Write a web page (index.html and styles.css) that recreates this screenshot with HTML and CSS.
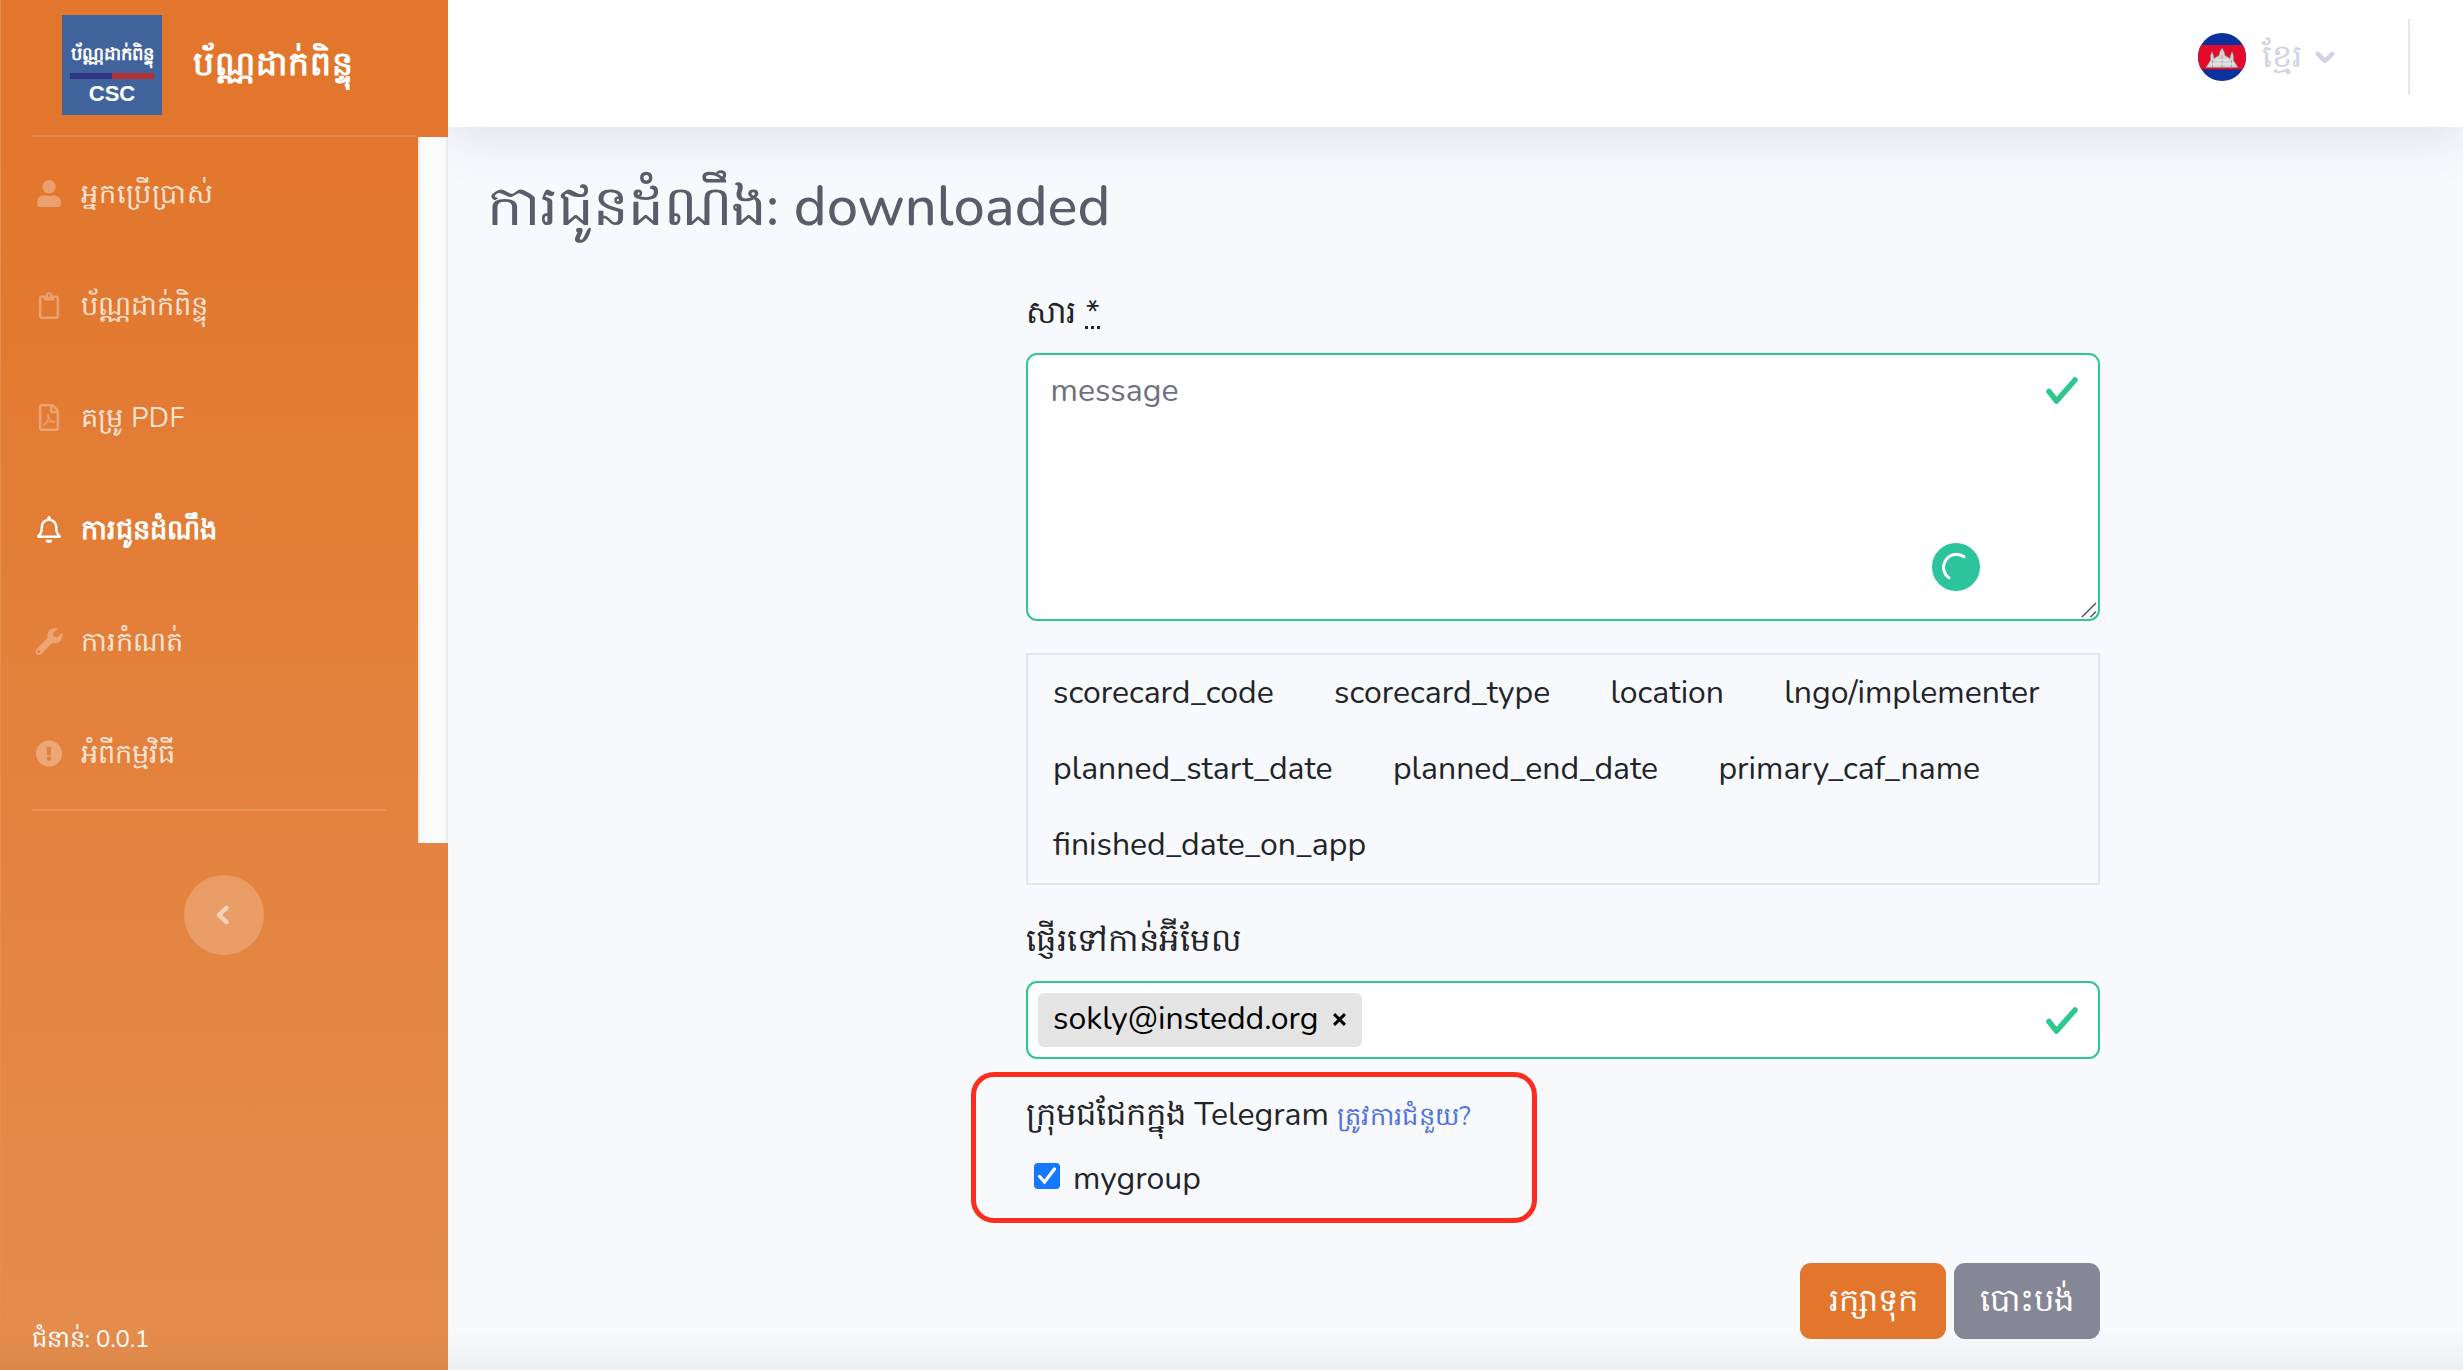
FILE: index.html
```html
<!DOCTYPE html>
<html lang="km">
<head>
<meta charset="utf-8">
<title>ការជូនដំណឹង</title>
<link rel="stylesheet" href="styles.css">
</head>
<body>
<div class="page">
  <aside class="sidebar">
    <a class="brand">
      <span class="logo"><span class="logo-name">ប័ណ្ណដាក់ពិន្ទុ</span><span class="logo-bar"></span><span class="logo-csc">CSC</span></span>
      <span class="brand-title">ប័ណ្ណដាក់ពិន្ទុ</span>
    </a>
    <hr class="rule rule-top">
    <div class="nav-wrap">
      <nav class="nav">
        <a class="item"><svg class="ico" viewBox="0 0 448 512"><path d="M224 256a128 128 0 1 0 0-256 128 128 0 1 0 0 256zm89.600 32h-16.700c-22.200 10.200-46.900 16-72.900 16s-50.600-5.800-72.900-16h-16.700C60.200 288 0 348.200 0 422.400V464c0 26.500 21.500 48 48 48h352c26.500 0 48-21.500 48-48v-41.600c0-74.200-60.200-134.400-134.400-134.400z"/></svg><span class="nm-users">អ្នកប្រើប្រាស់</span></a>
        <a class="item"><svg class="ico" viewBox="-32 0 448 512"><path d="M336 64h-80c0-35.300-28.700-64-64-64s-64 28.700-64 64H48C21.500 64 0 85.500 0 112v352c0 26.500 21.500 48 48 48h288c26.500 0 48-21.500 48-48V112c0-26.500-21.500-48-48-48zM192 40c13.300 0 24 10.700 24 24s-10.700 24-24 24-24-10.700-24-24 10.700-24 24-24zm144 418a6 6 0 0 1-6 6H54a6 6 0 0 1-6-6V118a6 6 0 0 1 6-6h42v36a12 12 0 0 0 12 12h168a12 12 0 0 0 12-12v-36h42a6 6 0 0 1 6 6z"/></svg><span>ប័ណ្ណដាក់ពិន្ទុ</span></a>
        <a class="item"><svg class="ico" viewBox="-32 0 448 512"><path d="M369.900 97.900L286 14C277 5 264.800-.1 252.100-.1H48C21.500 0 0 21.500 0 48v416c0 26.500 21.500 48 48 48h288c26.500 0 48-21.500 48-48V131.900c0-12.700-5.100-25-14.100-34zM332.100 128H256V51.900l76.100 76.100zM48 464V48h160v104c0 13.300 10.700 24 24 24h104v288H48zm250.200-143.700c-12.200-12-47-8.700-64.400-6.500-17.200-10.500-28.700-25-36.800-46.300 3.900-16.100 10.100-40.600 5.400-56-4.200-26.200-37.800-23.600-42.600-5.900-4.400 16.100-.4 38.500 7 67.100-10 23.900-24.900 56-35.400 74.400-20 10.300-47 26.200-51 46.200-3.300 15.800 26 55.200 76.100-31.200 22.400-7.400 46.800-16.500 68.400-20.100 18.900 10.200 41 17 55.800 17 25.500 0 28-28.200 17.500-38.700zm-198.100 77.800c5.100-13.700 24.500-29.500 30.400-35-19 30.300-30.400 35.700-30.400 35zm81.600-190.600c7.400 0 6.700 32.100 1.800 40.800-4.400-13.900-4.300-40.800-1.800-40.800zm-24.400 136.600c9.700-16.900 18-37 24.700-54.700 8.300 15.100 18.900 27.200 30.100 35.500-20.800 4.300-38.900 13.100-54.800 19.200zm131.600-5s-5 6-37.300-7.800c35.100-2.600 40.900 5.400 37.300 7.800z"/></svg><span class="nm-pdf">គម្រូ PDF</span></a>
        <a class="item active"><svg class="ico" viewBox="0 0 448 512"><path d="M439.400 362.300c-19.300-20.800-55.500-52-55.500-154.300 0-77.700-54.500-139.900-127.900-155.200V32c0-17.700-14.300-32-32-32s-32 14.300-32 32v20.800C118.600 68.100 64.100 130.300 64.100 208c0 102.300-36.200 133.500-55.500 154.300C2.600 368.700 0 376.400 0 384c.1 16.400 13 32 32.100 32h383.800c19.100 0 32-15.600 32.100-32 0-7.600-2.600-15.300-8.600-21.700zM67.500 368c21.200-28 44.400-74.300 44.500-159.400V208c0-61.900 50.100-112 112-112s112 50.100 112 112v.6c.1 85.100 23.300 131.500 44.500 159.400zM224 512c35.300 0 64-28.700 64-64H160c0 35.400 28.600 64 64 64z"/></svg><span>ការជូនដំណឹង</span></a>
        <a class="item"><svg class="ico" viewBox="0 0 512 512"><path d="M507.700 109.100c-2.200-9-13.500-12.100-20.100-5.500l-74.400 74.400-67.900-11.300-11.300-67.900 74.400-74.400c6.600-6.600 3.400-17.900-5.700-20.200-47.400-11.700-99.600.9-136.600 37.900-39.600 39.600-50.500 97.100-34.100 147.200L18.700 402.800c-25 25-25 65.500 0 90.500s65.500 25 90.500 0l213.200-213.200c50.100 16.700 107.500 5.700 147.400-34.200 37.100-37.100 49.700-89.300 37.900-136.800zM64 472a24 24 0 1 1 0-48 24 24 0 0 1 0 48z"/></svg><span>ការកំណត់</span></a>
        <a class="item"><svg class="ico" viewBox="0 0 512 512"><path fill-rule="evenodd" d="M504 256a248 248 0 1 1-496 0 248 248 0 0 1 496 0zm-248 50a46 46 0 1 0 0 92 46 46 0 0 0 0-92zm-43.700-165.300l7.400 136c.4 6.400 5.700 11.300 12 11.300h48.600c6.400 0 11.600-5 12-11.300l7.400-136c.4-6.900-5.100-12.700-12-12.700h-63.400c-6.900 0-12.400 5.800-12 12.700z"/></svg><span>អំពីកម្មវិធី</span></a>
        <hr class="rule">
      </nav>
      <div class="track"></div>
    </div>
    <button class="toggle"><svg viewBox="0 0 13 20"><path d="M10.500 2.800L3 10l7.500 7.200"/></svg></button>
    <div class="version">ជំនាន់: 0.0.1</div>
  </aside>
  <div class="content">
    <header class="topbar">
      <svg class="flag" viewBox="0 0 48 48"><defs><clipPath id="round"><circle cx="24" cy="24" r="24"/></clipPath></defs><g clip-path="url(#round)"><path fill="#0a319c" d="M0 0h48v48H0z"/><path fill="#e30a2d" d="M0 12h48v24.500H0z"/><path fill="#d4d4d4" stroke="#8c8580" stroke-width=".5" d="M8 34.500l3-5 1.500-2v-5l1.500-4 1.500 4 .5 3 3-2 2-1 .5-3 2.500-4.500 2.500 4.500.5 3 2 1 3 2 .5-3 1.500-4 1.500 4v5l1.500 2 3 5z"/><path stroke="#999" stroke-width=".8" d="M14.500 27v7M24 22v12M33.500 27v7" fill="none"/><path stroke="#efefef" stroke-width="1.200" d="M12 31h24M17 27h14" fill="none"/></g></svg>
      <span class="lang">ខ្មែរ</span>
      <svg class="caret" viewBox="0 0 20 13"><path d="M2.800 2.800L10 10l7.200-7.200"/></svg>
      <span class="sep"></span>
    </header>
    <main class="main">
      <h1 class="title"><span class="title-km">ការជូនដំណឹង</span>: downloaded</h1>
      <form class="form">
        <label class="label label-msg">សារ <span class="req">*</span></label>
        <div class="area">
          <textarea class="text">message</textarea>
          <svg class="check" viewBox="0 0 32 27"><path d="M3 14.500L10.500 24 29 3"/></svg>
          <svg class="spin" viewBox="0 0 48 48"><circle cx="24" cy="24" r="24"/><path d="M32 13.800A12.500 12.500 0 1 0 17 34.800" /></svg>
          <svg class="grip" viewBox="0 0 16 16"><path d="M1 15L15 1M9.500 15L15 9.500"/></svg>
        </div>
        <div class="vars"><span>scorecard_code</span><span>scorecard_type</span><span>location</span><span>lngo/implementer</span><span>planned_start_date</span><span>planned_end_date</span><span>primary_caf_name</span><span>finished_date_on_app</span></div>
        <label class="label label-mail">ផ្ញើរទៅកាន់អ៊ីមែល</label>
        <div class="tags">
          <span class="tag">sokly@instedd.org<svg class="x" viewBox="0 0 12 12"><path d="M1 1l10 10M11 1L1 11"/></svg></span>
          <svg class="check" viewBox="0 0 32 27"><path d="M3 14.500L10.500 24 29 3"/></svg>
        </div>
        <div class="group">
          <div class="label">ក្រុមជជែកក្នុង Telegram <a class="help">ត្រូវការជំនួយ?</a></div>
          <div class="option"><svg class="box" viewBox="0 0 26 26"><rect width="26" height="26" rx="4"/><path d="M5.500 13.500l5 5.500L20.500 6"/></svg><span>mygroup</span></div>
          <div class="callout"></div>
        </div>
        <div class="actions"><button type="button" class="btn save">រក្សាទុក</button><button type="button" class="btn cancel">បោះបង់</button></div>
      </form>
    </main>
  </div>
  <div class="fade"></div>
</div>
</body>
</html>
```
FILE: styles.css
```css
*{box-sizing:border-box}
body{margin:0;font-family:Nunito,"Open Sans",sans-serif;font-size:32px;line-height:48px;color:#212529;background:#f8f9fd}
button{font:inherit;border:0;padding:0}
.page{display:flex;height:1370px;overflow:hidden;position:relative}

.sidebar{width:448px;flex:none;display:flex;flex-direction:column;position:relative;z-index:2;color:#fff;background:linear-gradient(180deg,#e2762c 10%,#e58d4d 100%);box-shadow:inset 1px 0 #e68d50}
.brand{display:flex;align-items:center;gap:31px;height:135px;padding:0 0 5px 62px}
.logo{width:100px;height:100px;background:#41639c;display:flex;flex-direction:column;align-items:center;flex:none;padding-top:20px}
.logo-name{font-size:18px;line-height:38px;font-weight:700;white-space:nowrap}
.logo-bar{width:84px;height:6px;background:linear-gradient(90deg,#2f3580 50%,#b43032 50%)}
.logo-csc{font:700 22px/29px "Liberation Sans",sans-serif}
.brand-title{font-weight:800;font-size:33px;letter-spacing:1.100px;white-space:nowrap}
.rule{border:0;height:2px;margin:0 32px;background:rgba(255,255,255,.15);flex:none}
.nav-wrap{display:flex;height:706px}
.nav{width:418px}
.track{width:30px;background:#fafafa;border:solid #ebebeb;border-width:0 2px}
.item{display:flex;align-items:center;height:112px;padding-left:34px;font-size:27.2px;color:rgba(255,255,255,.8);white-space:nowrap}
.item span{padding-top:3px}
.nm-users{letter-spacing:1px}
.nm-pdf{letter-spacing:.4px}
.ico{width:30px;height:27px;margin-right:17px;fill:rgba(255,255,255,.3);flex:none}
.active{color:#fff;font-weight:700}
.active .ico{fill:#fff}
.toggle{width:80px;height:80px;border-radius:50%;background:rgba(255,255,255,.2);align-self:center;margin-top:32px;display:flex;align-items:center;justify-content:center;flex:none}
.toggle svg{width:13px;height:20px;margin-right:3px;fill:none;stroke:rgba(255,255,255,.55);stroke-width:4.500;stroke-linecap:round;stroke-linejoin:round}
.version{margin-top:auto;padding:0 32px 15px;font-size:24px;line-height:32px;letter-spacing:-.15px}

.content{flex:1;display:flex;flex-direction:column}
.topbar{height:127px;flex:none;background:#fff;box-shadow:0 5px 56px rgba(58,59,69,.15);display:flex;align-items:center;justify-content:flex-end;padding:0 53px 13px 0}
.flag{width:48px;height:48px}
.lang{width:53px;padding-left:0;margin-left:16px;font-size:32px;font-weight:500;color:#d1d3e2;white-space:nowrap}
.caret{width:20px;height:13px;fill:none;stroke:#d1d3e2;stroke-width:4.500;stroke-linecap:round;stroke-linejoin:round}
.sep{width:2px;height:76px;margin-left:73px;background:#e3e6f0}
.main{padding:46px 0 0 40px}
.title{margin:0 0 48px -1px;font-size:56px;line-height:68px;font-weight:500;color:#5a5c69}
.title-km{letter-spacing:-.7px}
.form{width:1074px;margin-left:538px}
.label{display:block;margin-bottom:16px;white-space:nowrap}
.label-msg{letter-spacing:.4px}
.req{text-decoration:underline dotted;text-underline-offset:3px}
.area{position:relative;height:268px}
.text{display:block;width:100%;height:100%;margin:0;padding:12px 22.500px;font:inherit;color:#6e707e;background:#fff;border:2px solid #2dc88d;border-radius:11px;resize:none;outline:0}
.check{width:32px;height:27px;fill:none;stroke:#2dc88d;stroke-width:5.500;stroke-linecap:round;stroke-linejoin:round}
.area .check{position:absolute;right:22px;top:24px}
.spin{position:absolute;left:906px;top:190px;width:48px;height:48px;fill:#2bc49c}
.spin path{fill:none;stroke:#fff;stroke-width:3;stroke-linecap:round}
.grip{position:absolute;right:3px;bottom:3px;width:16px;height:16px;fill:none;stroke:#555;stroke-width:1.500}
.vars{margin-top:32px;height:232px;border:2px solid #e3e6f0;padding-left:25px;display:flex;flex-wrap:wrap;column-gap:60.300px;line-height:76px;align-content:flex-start}
.label-mail{margin-top:32px;letter-spacing:.7px}
.tags{display:flex;align-items:center;justify-content:space-between;height:78px;padding:0 20px 0 10px;background:#fff;border:2px solid #2dc88d;border-radius:11px}
.tag{display:flex;align-items:center;width:324px;height:54px;padding:0 16px 3px 15px;border-radius:6px;background:#e4e4e4;color:#000;justify-content:space-between}
.x{width:13px;height:13px;fill:none;stroke:#000;stroke-width:2.800;margin-top:2px}
.group{position:relative;margin-top:32px}
.help{font-size:25.600px;letter-spacing:.3px;color:#4e73df}
.option{display:flex;align-items:center;gap:13px;padding-left:8px;margin-top:-2px}
.box{width:26px;height:26px;margin-bottom:6px;fill:#1479ff}
.box path{fill:none;stroke:#fff;stroke-width:3.200;stroke-linecap:round}
.callout{position:absolute;left:-55px;top:-19px;width:566px;height:151px;border:5px solid #fc2d1e;border-radius:23px}
.actions{display:flex;justify-content:flex-end;gap:8px;margin-top:60px}
.btn{width:146px;height:76px;border-radius:11px;color:#fff}
.save{background:#e2762c}
.cancel{background:#858796}
.fade{position:absolute;left:0;right:0;bottom:0;height:40px;z-index:3;background:linear-gradient(rgba(0,0,0,0),rgba(0,0,0,.04))}
```
